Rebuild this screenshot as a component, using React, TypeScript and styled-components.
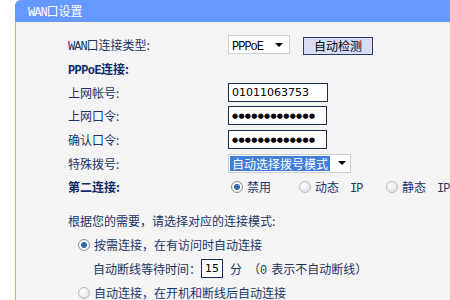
import styled, { createGlobalStyle, css } from 'styled-components'

const GlobalStyle = createGlobalStyle`
  html, body {
    margin: 0;
    padding: 0;
    background: #ffffff;
  }
  body {
    font-family: 'Noto Sans CJK SC', 'DejaVu Sans', sans-serif;
    font-size: 12px;
    color: #1b3466;
  }
`

export default function App() {
  return (
    <>
      <GlobalStyle />
      <Page>
        <Panel>
          <Header>
            <span>
              <Mono>WAN</Mono>口设置
            </span>
          </Header>
          <Body>
            <FormGrid>
              <Label>
                <Mono>WAN</Mono>口连接类型:
              </Label>
              <Controls>
                <Select width={62}>
                  <SelectText>
                    <Mono $dark>PPPoE</Mono>
                  </SelectText>
                  <Arrow />
                </Select>
                <DetectButton>自动检测</DetectButton>
              </Controls>

              <Label $bold>
                <Mono $bold>PPPoE</Mono>连接:
              </Label>
              <span />

              <Label>上网帐号:</Label>
              <Controls>
                <TextBox width={100}>01011063753</TextBox>
              </Controls>

              <Label>上网口令:</Label>
              <Controls>
                <TextBox width={99}>
                  <Dots>{'●'.repeat(13)}</Dots>
                </TextBox>
              </Controls>

              <Label>确认口令:</Label>
              <Controls>
                <TextBox width={99}>
                  <Dots>{'●'.repeat(13)}</Dots>
                </TextBox>
              </Controls>

              <Label>特殊拨号:</Label>
              <Controls>
                <Select width={123}>
                  <SelectText $selected>自动选择拨号模式</SelectText>
                  <Arrow />
                </Select>
              </Controls>

              <Label $bold>第二连接:</Label>
              <RadioRow>
                <RadioItem width={68}>
                  <Radio $checked />
                  <span>禁用</span>
                </RadioItem>
                <RadioItem width={87}>
                  <Radio />
                  <span>
                    动态
                    <Spacer width={11} />
                    <Mono>IP</Mono>
                  </span>
                </RadioItem>
                <RadioItem>
                  <Radio />
                  <span>
                    静态
                    <Spacer width={11} />
                    <Mono>IP</Mono>
                  </span>
                </RadioItem>
              </RadioRow>
            </FormGrid>

            <ModeSection>
              <ModeLine>
                <span>根据您的需要，请选择对应的连接模式:</span>
              </ModeLine>
              <ModeLine $indent={10}>
                <Radio $checked />
                <span>按需连接，在有访问时自动连接</span>
              </ModeLine>
              <ModeLine $indent={25}>
                <span>自动断线等待时间：</span>
                <SmallBox>15</SmallBox>
                <span>
                  分
                  <Spacer width={6} />
                  （<Mono>0</Mono>
                  <Spacer width={5} />
                  表示不自动断线）
                </span>
              </ModeLine>
              <ModeLine $indent={10}>
                <Radio />
                <span>自动连接，在开机和断线后自动连接</span>
              </ModeLine>
            </ModeSection>
          </Body>
        </Panel>
      </Page>
    </>
  )
}

const Page = styled.div`
  width: 450px;
  height: 300px;
  overflow: hidden;
  padding-left: 15px;
  box-sizing: border-box;
`

const Panel = styled.div`
  height: 320px;
  background: #f4f4f5;
  border-left: 1px solid #dcae62;
  border-top-left-radius: 6px;
`

const Header = styled.div`
  height: 22px;
  background: #6699ff;
  border-top-left-radius: 6px;
  margin-left: -1px;
  padding-left: 13px;
  display: flex;
  align-items: center;
  color: #ffffff;
  font-size: 12px;
`

const Mono = styled.span<{ $bold?: boolean; $dark?: boolean }>`
  font-family: 'Liberation Mono', 'DejaVu Sans Mono', monospace;
  font-size: 12px;
  letter-spacing: -1px;
  ${(p) =>
    p.$bold &&
    css`
      font-weight: 700;
      letter-spacing: -0.6px;
    `}
  ${(p) =>
    p.$dark &&
    css`
      color: #000000;
    `}
`

const Spacer = styled.span<{ width: number }>`
  display: inline-block;
  width: ${(p) => p.width}px;
`

const Body = styled.div`
  padding: 11px 0 0 52px;
`

const FormGrid = styled.div`
  display: grid;
  grid-template-columns: 160px 1fr;
  grid-auto-rows: 23.7px;
  align-items: center;
`

const Label = styled.div<{ $bold?: boolean }>`
  white-space: nowrap;
  ${(p) =>
    p.$bold &&
    css`
      font-weight: 700;
      color: #10296a;
    `}
`

const Controls = styled.div`
  display: flex;
  align-items: center;
  gap: 13px;
`

const Select = styled.div<{ width: number }>`
  width: ${(p) => p.width}px;
  height: 19px;
  box-sizing: border-box;
  background: #ffffff;
  border: 1px solid #c9ced8;
  display: flex;
  align-items: center;
  padding: 0 1px;
`

const SelectText = styled.span<{ $selected?: boolean }>`
  flex: 1;
  height: 15px;
  line-height: 15px;
  padding: 0 2px;
  white-space: nowrap;
  color: #000000;
  ${(p) =>
    p.$selected &&
    css`
      flex: 0 0 auto;
      margin-right: auto;
      background: #3f7fd8;
      color: #ffffff;
    `}
`

const Arrow = styled.span`
  width: 0;
  height: 0;
  margin: 0 5px 0 8px;
  border-left: 4px solid transparent;
  border-right: 4px solid transparent;
  border-top: 4px solid #000000;
`

const DetectButton = styled.button`
  width: 70px;
  height: 18px;
  box-sizing: border-box;
  padding: 0;
  background: #dadcf6;
  border: 1px solid #2a3b66;
  font-family: 'Noto Sans CJK SC', sans-serif;
  font-size: 12px;
  color: #000000;
  line-height: 14px;
  margin-top: 2px;
`

const TextBox = styled.div<{ width: number }>`
  width: ${(p) => p.width}px;
  height: 19px;
  box-sizing: border-box;
  background: #ffffff;
  border: 1px solid #1c2d55;
  padding: 0 3px;
  display: flex;
  align-items: center;
  font-family: 'DejaVu Sans', sans-serif;
  font-size: 11px;
  color: #000000;
  overflow: hidden;
`

const Dots = styled.span`
  font-size: 7px;
  letter-spacing: 0.3px;
  white-space: nowrap;
`

const RadioRow = styled.div`
  display: flex;
  align-items: center;
  padding-left: 3px;
`

const RadioItem = styled.label<{ width?: number }>`
  display: flex;
  align-items: center;
  gap: 4px;
  white-space: nowrap;
  ${(p) =>
    p.width &&
    css`
      width: ${p.width}px;
    `}
`

const Radio = styled.span<{ $checked?: boolean }>`
  display: inline-block;
  flex: 0 0 auto;
  width: 12px;
  height: 12px;
  box-sizing: border-box;
  border-radius: 50%;
  border: 1px solid #b9bcc4;
  background: radial-gradient(circle at 35% 35%, #ffffff 0%, #e6e7ea 70%, #d2d4d9 100%);
  ${(p) =>
    p.$checked &&
    css`
      border-color: #8d9099;
      background: radial-gradient(
        circle,
        #0f4b8c 0%,
        #3f83c9 28%,
        #2a5a96 38%,
        #ffffff 45%,
        #e0e2e6 100%
      );
    `}
`

const ModeSection = styled.div`
  margin-top: 10px;
  display: flex;
  flex-direction: column;
`

const ModeLine = styled.div<{ $indent?: number }>`
  height: 24px;
  display: flex;
  align-items: center;
  gap: 4px;
  white-space: nowrap;
  padding-left: ${(p) => p.$indent ?? 0}px;
`

const SmallBox = styled.span`
  width: 22px;
  height: 19px;
  box-sizing: border-box;
  border: 1px solid #1c2d55;
  background: #ffffff;
  color: #000000;
  font-family: 'DejaVu Sans', sans-serif;
  font-size: 11px;
  display: flex;
  align-items: center;
  padding-left: 3px;
  margin: 0 3px 0 -4px;
`
